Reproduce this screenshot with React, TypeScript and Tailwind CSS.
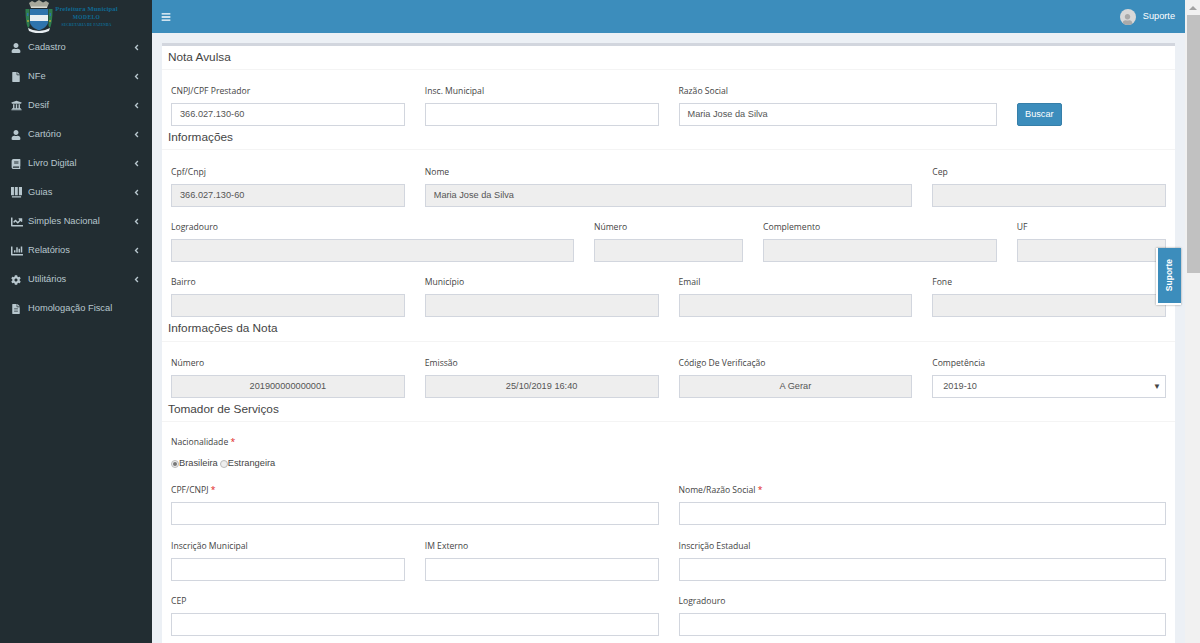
import React from 'react';
import {
  FaAngleLeft,
  FaBars,
  FaBook,
  FaChartBar,
  FaChartLine,
  FaCog,
  FaFile,
  FaFileAlt,
  FaUniversity,
  FaUser,
} from 'react-icons/fa';

const GuiasIcon = () => (
  <svg viewBox="0 0 12 12" className="w-[11px] h-[11px]" fill="currentColor">
    <path d="M0 0h3.2v9H0zM4.2 0h3.2v9H4.2zM8.6 0H12v9H8.6zM1 10.2h10v1.2H1z" />
  </svg>
);

const menu: { label: string; icon: React.ReactNode; arrow?: boolean }[] = [
  { label: 'Cadastro', icon: <FaUser size={10} />, arrow: true },
  { label: 'NFe', icon: <FaFile size={10} />, arrow: true },
  { label: 'Desif', icon: <FaUniversity size={11} />, arrow: true },
  { label: 'Cartório', icon: <FaUser size={10} />, arrow: true },
  { label: 'Livro Digital', icon: <FaBook size={10} />, arrow: true },
  { label: 'Guias', icon: <GuiasIcon />, arrow: true },
  { label: 'Simples Nacional', icon: <FaChartLine size={12} />, arrow: true },
  { label: 'Relatórios', icon: <FaChartBar size={12} />, arrow: true },
  { label: 'Utilitários', icon: <FaCog size={10} />, arrow: true },
  { label: 'Homologação Fiscal', icon: <FaFileAlt size={10} /> },
];

const Logo = () => (
  <svg viewBox="0 0 28 34" className="w-[28px] h-[34px] shrink-0">
    {/* crown */}
    <path d="M4 3 L7 1 L10 2.5 L14 0 L18 2.5 L21 1 L24 3 L22 8 H6 Z" fill="#a8a89c" />
    <path d="M6 6.5 H22 V8 H6 Z" fill="#d9d9d0" />
    {/* branches */}
    <path d="M0.5 9 H4.5 V26 L3 28 C1 24 0.5 16 0.5 9 Z" fill="#2e7d4f" />
    <path d="M27.5 9 H23.5 V26 L25 28 C27 24 27.5 16 27.5 9 Z" fill="#2e7d4f" />
    <path d="M2 13 h1.4 v3 h-1.4 z M24.6 13 h1.4 v3 h-1.4 z" fill="#2f6fa8" />
    <path d="M2.4 20 h1.2 v2 h-1.2 z M24.4 20 h1.2 v2 h-1.2 z" fill="#c9b23a" />
    {/* shield */}
    <path d="M5 9 H23 V22 C23 26 18 29 14 30.5 C10 29 5 26 5 22 Z" fill="#2f74ad" />
    <path d="M5 15 H23 V21 H5 Z" fill="#e8eef2" />
    <path d="M3 28 Q14 34 25 28 L24 31 Q14 35.5 4 31 Z" fill="#e8eef2" />
  </svg>
);

const Sidebar = () => (
  <aside className="w-[152px] shrink-0 h-full bg-[#222d32] flex flex-col">
    <div className="h-[33px] flex items-start pl-[25px] gap-[5px] overflow-hidden">
      <Logo />
      <div className="flex flex-col items-center w-[57px] pt-[5px] text-[#0f6a94] font-bold font-['Liberation_Serif',serif]">
        <span className="text-[6.5px] leading-[8px] whitespace-nowrap tracking-[0.2px]">Prefeitura Municipal</span>
        <span className="text-[5.5px] leading-[8px] tracking-[0.4px]">MODELO</span>
        <span className="text-[3.5px] leading-[4px] mt-[2px] whitespace-nowrap tracking-[0.2px]">SECRETARIA DE FAZENDA</span>
      </div>
    </div>
    <nav className="flex flex-col">
      {menu.map(m => (
        <div key={m.label} className="h-[29px] flex items-center pl-[11px] pr-[11px] text-[#b8c7ce] text-[9.3px]">
          <span className="w-[17px] flex items-center">{m.icon}</span>
          <span className="flex-1 whitespace-nowrap">{m.label}</span>
          {m.arrow && <FaAngleLeft size={9} />}
        </div>
      ))}
    </nav>
  </aside>
);

const labelCls =
  "h-[15px] pt-[2px] mb-[5px] leading-[13px] text-[8.6px] text-[#444] font-['Open_Sans',sans-serif] whitespace-nowrap";

const Field = ({
  label,
  value,
  span,
  disabled,
  required,
  center,
}: {
  label: string;
  value?: string;
  span: string;
  disabled?: boolean;
  required?: boolean;
  center?: boolean;
}) => (
  <div className={`${span} flex flex-col`}>
    <label className={labelCls}>
      {label}
      {required && <span className="text-[#e02020]"> *</span>}
    </label>
    <div
      className={`h-[23px] border border-[#d2d6de] flex items-center px-[8px] text-[9.2px] text-[#555] ${
        disabled ? 'bg-[#eee]' : 'bg-white'
      } ${center ? 'justify-center' : ''}`}
    >
      {value}
    </div>
  </div>
);

const Title = ({ children, tall }: { children: React.ReactNode; tall?: boolean }) => (
  <div
    className={`${
      tall ? 'h-[25px]' : 'h-[24px]'
    } -mx-[9px] pl-[6px] border-b border-[#f4f4f4] flex items-center text-[11.8px] text-[#444]`}
  >
    {children}
  </div>
);

const Row = ({ children, className }: { children: React.ReactNode; className?: string }) => (
  <div className={`grid grid-cols-12 gap-x-[20px] ${className ?? ''}`}>{children}</div>
);

export default function App() {
  return (
    <div className="relative w-[1200px] h-[643px] overflow-hidden flex font-['Liberation_Sans',Arial,sans-serif] bg-[#ecf0f5]">
      <Sidebar />

      <div className="w-[1033px] h-full flex flex-col">
        <header className="h-[33px] shrink-0 bg-[#3c8dbc] flex items-center justify-between pl-[9px] pr-[10px] text-white">
          <FaBars size={10} />
          <div className="flex items-center gap-[7px] text-[9.2px]">
            <div className="w-[16px] h-[16px] rounded-full bg-[#d8d8d8] overflow-hidden flex items-end justify-center text-[#a9a9a9]">
              <FaUser size={11} />
            </div>
            <span>Suporte</span>
          </div>
        </header>

        <main className="flex-1 overflow-hidden pt-[10px] px-[10px]">
          <section className="bg-white border-t-[3px] border-[#d2d6de] px-[9px] pb-[20px]">
            <Title>Nota Avulsa</Title>
            <Row className="pt-[13px]">
              <Field span="col-span-3" label="CNPJ/CPF Prestador" value="366.027.130-60" />
              <Field span="col-span-3" label="Insc. Municipal" />
              <Field span="col-span-4" label="Razão Social" value="Maria Jose da Silva" />
              <div className="col-span-2 flex items-end">
                <button className="w-[45px] h-[23px] rounded-[2px] bg-[#3c8dbc] border border-[#367fa9] text-white text-[9.2px]">
                  Buscar
                </button>
              </div>
            </Row>

            <Title>Informações</Title>
            <Row className="pt-[14px] gap-y-[12px]">
              <Field span="col-span-3" label="Cpf/Cnpj" value="366.027.130-60" disabled />
              <Field span="col-span-6" label="Nome" value="Maria Jose da Silva" disabled />
              <Field span="col-span-3" label="Cep" disabled />
              <Field span="col-span-5" label="Logradouro" disabled />
              <Field span="col-span-2" label="Número" disabled />
              <Field span="col-span-3" label="Complemento" disabled />
              <Field span="col-span-2" label="UF" disabled />
              <Field span="col-span-3" label="Bairro" disabled />
              <Field span="col-span-3" label="Município" disabled />
              <Field span="col-span-3" label="Email" disabled />
              <Field span="col-span-3" label="Fone" disabled />
            </Row>

            <Title tall>Informações da Nota</Title>
            <Row className="pt-[13px]">
              <Field span="col-span-3" label="Número" value="201900000000001" disabled center />
              <Field span="col-span-3" label="Emissão" value="25/10/2019 16:40" disabled center />
              <Field span="col-span-3" label="Código De Verificação" value="A Gerar" disabled center />
              <div className="col-span-3 flex flex-col">
                <label className={labelCls}>Competência</label>
                <div className="h-[23px] border border-[#d2d6de] bg-white flex items-center justify-between pl-[10px] pr-[4px] text-[9.2px] text-[#555]">
                  <span>2019-10</span>
                  <span className="text-[8px] text-[#444]">▼</span>
                </div>
              </div>
            </Row>

            <Title>Tomador de Serviços</Title>
            <div className="pt-[12px]">
              <label className={`block ${labelCls}`}>
                Nacionalidade <span className="text-[#e02020]">*</span>
              </label>
              <div className="mt-[8px] h-[14px] flex items-center text-[9.3px] text-[#444]">
                <span className="w-[8px] h-[8px] rounded-full border border-[#bbb] bg-[#eee] flex items-center justify-center">
                  <span className="w-[4px] h-[4px] rounded-full bg-[#777]" />
                </span>
                <span>Brasileira</span>
                <span className="ml-[2px] w-[8px] h-[8px] rounded-full border border-[#bbb] bg-[#eee]" />
                <span>Estrangeira</span>
              </div>
            </div>
            <Row className="pt-[11px] gap-y-[12.5px]">
              <Field span="col-span-6" label="CPF/CNPJ" required />
              <Field span="col-span-6" label="Nome/Razão Social" required />
              <Field span="col-span-3" label="Inscrição Municipal" />
              <Field span="col-span-3" label="IM Externo" />
              <Field span="col-span-6" label="Inscrição Estadual" />
              <Field span="col-span-6" label="CEP" />
              <Field span="col-span-6" label="Logradouro" />
            </Row>
          </section>
        </main>
      </div>

      {/* scrollbar */}
      <div className="w-[15px] h-full bg-[#f1f1f1] flex flex-col">
        <div className="h-[15px] flex items-center justify-center">
          <span className="w-0 h-0 border-x-[4px] border-x-transparent border-b-[4px] border-b-[#a3a3a3]" />
        </div>
        <div className="ml-[2px] w-[13px] h-[258px] bg-[#c1c1c1]" />
      </div>

      {/* suporte tab */}
      <div className="absolute left-[1156px] top-[248px] w-[25px] h-[57px] bg-[#3c8dbc] border-l-2 border-b-2 border-white shadow-[0_0_2px_rgba(0,0,0,0.4)] flex items-center justify-center">
        <span className="[writing-mode:vertical-rl] rotate-180 text-white text-[8.5px] font-bold">Suporte</span>
      </div>
    </div>
  );
}
